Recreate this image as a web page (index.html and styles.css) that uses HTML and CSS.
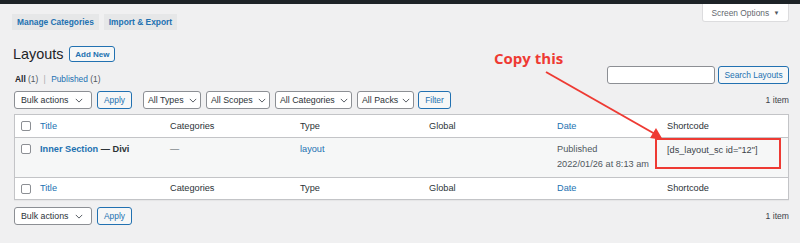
FILE: index.html
```html
<!DOCTYPE html>
<html>
<head>
<meta charset="utf-8">
<link rel="stylesheet" href="styles.css">
</head>
<body>
<div class="topbar"></div>
<div class="page">
  <div class="header">
    <div class="tabs">
      <span class="tab">Manage Categories</span>
      <span class="tab">Import &amp; Export</span>
    </div>
    <div class="screen-options">Screen Options <span class="tri">▼</span></div>
  </div>
  <div class="title-row">
    <h1>Layouts</h1>
    <span class="btn add-new">Add New</span>
  </div>
  <div class="sub-row">
    <div class="subsub"><b>All</b> <span class="count">(1)</span> <span class="sep">|</span> <span class="link">Published</span> <span class="count">(1)</span></div>
    <div class="search">
      <span class="search-input"></span>
      <span class="btn search-btn">Search Layouts</span>
    </div>
  </div>
  <div class="nav-row">
    <div class="actions">
      <span class="select w-bulk">Bulk actions<svg class="chev" viewBox="0 0 10 6"><path d="M1 1l4 4 4-4" fill="none" stroke="#50575e" stroke-width="1.2"/></svg></span>
      <span class="btn apply">Apply</span>
      <span class="select w-types sp">All Types<svg class="chev" viewBox="0 0 10 6"><path d="M1 1l4 4 4-4" fill="none" stroke="#50575e" stroke-width="1.2"/></svg></span>
      <span class="select w-scopes">All Scopes<svg class="chev" viewBox="0 0 10 6"><path d="M1 1l4 4 4-4" fill="none" stroke="#50575e" stroke-width="1.2"/></svg></span>
      <span class="select w-cats">All Categories<svg class="chev" viewBox="0 0 10 6"><path d="M1 1l4 4 4-4" fill="none" stroke="#50575e" stroke-width="1.2"/></svg></span>
      <span class="select w-packs">All Packs<svg class="chev" viewBox="0 0 10 6"><path d="M1 1l4 4 4-4" fill="none" stroke="#50575e" stroke-width="1.2"/></svg></span>
      <span class="btn filter">Filter</span>
    </div>
    <div class="items">1 item</div>
  </div>
  <div class="table">
    <div class="row head">
      <div class="cell cb"><span class="check"></span></div>
      <div class="cell link">Title</div>
      <div class="cell">Categories</div>
      <div class="cell">Type</div>
      <div class="cell">Global</div>
      <div class="cell link">Date</div>
      <div class="cell">Shortcode</div>
    </div>
    <div class="row data">
      <div class="cell cb"><span class="check"></span></div>
      <div class="cell"><b class="link">Inner Section</b> <b class="dark">— Divi</b></div>
      <div class="cell muted">—</div>
      <div class="cell link">layout</div>
      <div class="cell"></div>
      <div class="cell muted">Published<br>2022/01/26 at 8:13 am</div>
      <div class="cell sc">[ds_layout_sc id="12"]</div>
    </div>
    <div class="row foot">
      <div class="cell cb"><span class="check"></span></div>
      <div class="cell link">Title</div>
      <div class="cell">Categories</div>
      <div class="cell">Type</div>
      <div class="cell">Global</div>
      <div class="cell link">Date</div>
      <div class="cell">Shortcode</div>
    </div>
  </div>
  <div class="nav-row bottom">
    <div class="actions">
      <span class="select w-bulk">Bulk actions<svg class="chev" viewBox="0 0 10 6"><path d="M1 1l4 4 4-4" fill="none" stroke="#50575e" stroke-width="1.2"/></svg></span>
      <span class="btn apply">Apply</span>
    </div>
    <div class="items">1 item</div>
  </div>
</div>
<div class="annot-text">Copy this</div>
<svg class="annot-arrow" width="800" height="243" viewBox="0 0 800 243">
  <line x1="546" y1="72" x2="655" y2="134" stroke="#ee3a33" stroke-width="2"/>
  <polygon points="663,140 650,138 656,128" fill="#ee3a33"/>
</svg>
<div class="annot-box"></div>
</body>
</html>
```
FILE: styles.css
```css
* { box-sizing: border-box; }
body {
  margin: 0;
  background: #f0f0f1;
  font-family: "Liberation Sans", Arial, sans-serif;
  font-size: 9.2px;
  color: #3c434a;
  width: 800px;
  height: 243px;
  overflow: hidden;
  position: relative;
}
.topbar { height: 4px; background: #1d2327; }
.page { padding: 0 11px 0 14px; }
.header { display: flex; justify-content: space-between; align-items: flex-start; height: 30px; }
.tabs { display: flex; gap: 5px; margin-top: 10px; margin-left: -2px; }
.tab {
  height: 16px; line-height: 16px; padding: 0 5px;
  background: #e6e7e8; color: #2271b1; font-weight: bold; font-size: 8.4px;
}
.screen-options {
  width: 87px; height: 18px; line-height: 18px; text-align: center;
  background: #fff; border: 1px solid #dcdcde; border-top: none;
  border-radius: 0 0 3px 3px; color: #646970; font-size: 8.4px;
}
.tri { font-size: 6px; color: #50575e; margin-left: 2px; vertical-align: 1px; }
.title-row { display: flex; align-items: center; gap: 6px; height: 24px; margin-top: 8px; margin-left: -1px; }
h1 { margin: 0; font-size: 14.4px; font-weight: 400; color: #1d2327; }
.btn {
  display: inline-flex; align-items: center; justify-content: center;
  height: 18px; border: 1px solid #2271b1; border-radius: 3px;
  background: #f6f7f7; color: #2271b1; font-size: 8.4px;
}
.add-new { height: 16px; width: 46px; font-weight: bold; font-size: 8px; }
.sub-row { display: flex; justify-content: space-between; align-items: flex-start; height: 22px; }
.subsub { color: #50575e; margin-top: 8px; margin-left: 1px; font-size: 8.4px; }
.subsub b { color: #1d2327; }
.count { color: #50575e; }
.sep { color: #a7aaad; margin: 0 3px; }
.link { color: #2271b1; }
.search { display: flex; gap: 3px; align-items: center; }
.search-input { width: 108px; height: 18px; background: #fff; border: 1px solid #8c8f94; border-radius: 3px; }
.search-btn { width: 71px; }
.nav-row { display: flex; justify-content: space-between; align-items: center; height: 18px; margin-top: 3px; }
.actions { display: flex; align-items: center; gap: 5px; }
.select {
  display: inline-flex; align-items: center; justify-content: space-between;
  height: 18px; padding: 0 6px 0 6px; background: #fff;
  border: 1px solid #8c8f94; border-radius: 3px; color: #2c3338; font-size: 8.8px;
}
.chev { width: 8px; height: 5px; }
.w-bulk { width: 78px; }
.w-bulk .chev { margin-right: 2px; }
.apply { width: 35px; }
.sp { margin-left: 6px; }
.w-types { width: 58px; padding: 0 3px 0 4px; }
.w-scopes { width: 64px; padding: 0 3px 0 4px; }
.w-cats { width: 77px; padding: 0 3px 0 4px; }
.w-packs { width: 57px; padding: 0 3px 0 4px; }
.filter { width: 33px; margin-left: -1px; }
.items { color: #3c434a; font-size: 8.6px; }
.table {
  margin-top: 5px; background: #fff; border: 1px solid #c3c4c7;
  box-shadow: 0 1px 1px rgba(0,0,0,.04);
}
.row {
  display: grid;
  grid-template-columns: 19px 130px 130px 129px 128px 110px 1fr;
  align-items: center;
}
.head { height: 23px; border-bottom: 1px solid #c3c4c7; }
.foot { height: 22px; border-top: 1px solid #c3c4c7; }
.data { height: 39px; background: #f6f7f7; align-items: start; padding-top: 4px; }
.cell { padding-left: 6px; color: #2c3338; line-height: 14.5px; font-size: 9.2px; }
.cell.link { color: #2271b1; }
.cell.muted { color: #50575e; }
.cell b { font-weight: bold; }
.dark { color: #2c3338; }
.cb { padding-left: 6px; display: flex; align-items: center; }
.data .cb { padding-top: 2px; }
.check {
  width: 10px; height: 10px; border: 1px solid #8c8f94; border-radius: 2px; background: #fff;
}
.sc { color: #3c434a; padding-top: 1px; }
.bottom { margin-top: 7px; }
.annot-text {
  position: absolute; left: 494px; top: 48px;
  color: #ee3a33; font-weight: bold; font-size: 15px; font-family: "Open Sans", "Liberation Sans", sans-serif;
}
.annot-arrow { position: absolute; left: 0; top: 0; pointer-events: none; }
.annot-box {
  position: absolute; left: 655px; top: 138px; width: 126px; height: 31px;
  border: 2px solid #ee3a33;
}
```
